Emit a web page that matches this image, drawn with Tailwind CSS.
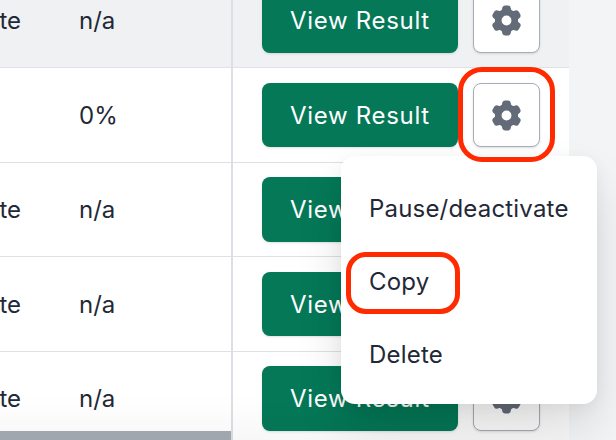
<!doctype html>
<html>
<head>
<meta charset="utf-8">
<script src="https://cdn.jsdelivr.net/npm/@tailwindcss/browser@4"></script>
</head>
<body class="m-0">
<div class="relative w-[616px] h-[440px] overflow-hidden bg-[#f3f4f6] font-['Inter','Noto_Sans',sans-serif] text-[24px] text-[#1f2937]">
  <div class="w-[569px] -mt-[26px] bg-white flex flex-col">

    <div class="h-[94px] shrink-0 flex bg-[#f0f1f3] border-b border-[#dfe0e5]">
      <div class="w-[231px] shrink-0 flex items-center pt-[1px]">
        <div class="w-[21px] flex justify-end whitespace-nowrap">Complete</div>
        <div class="ml-[58px]">n/a</div>
      </div>
      <div class="flex-1 border-l-2 border-[#dedfe4] pl-[29px] flex items-center gap-[15px]">
        <button class="w-[196px] h-[64.5px] rounded-[8px] bg-[#047857] text-white font-normal tracking-[0.68px] shadow-sm pt-[1px]">View Result</button>
        <button class="w-[67px] h-[64.5px] rounded-[8px] bg-white border border-[#a9adb6] flex items-center justify-center shadow-sm">
          <svg viewBox="0 0 24 24" class="w-[37px] h-[37px]" fill="#646b78"><path fill-rule="evenodd" clip-rule="evenodd" d="M11.078 2.25c-.917 0-1.699.663-1.85 1.567L9.05 4.889c-.02.12-.115.26-.297.348a7.493 7.493 0 0 0-.986.57c-.166.115-.334.126-.45.083L6.3 5.508a1.875 1.875 0 0 0-2.282.819l-.922 1.597a1.875 1.875 0 0 0 .432 2.385l.84.692c.095.078.17.229.154.43a7.598 7.598 0 0 0 0 1.139c.015.2-.059.352-.153.43l-.841.692a1.875 1.875 0 0 0-.432 2.385l.922 1.597a1.875 1.875 0 0 0 2.282.818l1.019-.382c.115-.043.283-.031.45.082.312.214.641.405.985.57.182.088.277.228.297.35l.178 1.071c.151.904.933 1.567 1.85 1.567h1.844c.916 0 1.699-.663 1.85-1.567l.178-1.072c.02-.12.114-.26.297-.349.344-.165.673-.356.985-.57.167-.114.335-.125.45-.082l1.02.382a1.875 1.875 0 0 0 2.28-.819l.923-1.597a1.875 1.875 0 0 0-.432-2.385l-.84-.692c-.095-.078-.17-.229-.154-.43a7.614 7.614 0 0 0 0-1.139c-.016-.2.059-.352.153-.43l.84-.692c.708-.582.891-1.59.433-2.385l-.922-1.597a1.875 1.875 0 0 0-2.282-.818l-1.02.382c-.114.043-.282.031-.449-.083a7.49 7.49 0 0 0-.985-.57c-.183-.087-.277-.227-.297-.348l-.179-1.072a1.875 1.875 0 0 0-1.85-1.567h-1.843ZM12 15.2a3.2 3.2 0 1 0 0-6.4 3.2 3.2 0 0 0 0 6.4Z"/></svg>
        </button>
      </div>
    </div>

    <div class="h-[95px] shrink-0 flex border-b border-[#dfe0e5]">
      <div class="w-[231px] shrink-0 flex items-center pt-[1px]">
        <div class="w-[21px]"></div>
        <div class="ml-[58px]">0%</div>
      </div>
      <div class="flex-1 border-l-2 border-[#dedfe4] pl-[29px] flex items-center gap-[15px]">
        <button class="w-[196px] h-[64.5px] rounded-[8px] bg-[#047857] text-white font-normal tracking-[0.68px] shadow-sm pt-[1px]">View Result</button>
        <button class="w-[67px] h-[64.5px] rounded-[8px] bg-white border border-[#a9adb6] flex items-center justify-center shadow-sm">
          <svg viewBox="0 0 24 24" class="w-[37px] h-[37px]" fill="#646b78"><path fill-rule="evenodd" clip-rule="evenodd" d="M11.078 2.25c-.917 0-1.699.663-1.85 1.567L9.05 4.889c-.02.12-.115.26-.297.348a7.493 7.493 0 0 0-.986.57c-.166.115-.334.126-.45.083L6.3 5.508a1.875 1.875 0 0 0-2.282.819l-.922 1.597a1.875 1.875 0 0 0 .432 2.385l.84.692c.095.078.17.229.154.43a7.598 7.598 0 0 0 0 1.139c.015.2-.059.352-.153.43l-.841.692a1.875 1.875 0 0 0-.432 2.385l.922 1.597a1.875 1.875 0 0 0 2.282.818l1.019-.382c.115-.043.283-.031.45.082.312.214.641.405.985.57.182.088.277.228.297.35l.178 1.071c.151.904.933 1.567 1.85 1.567h1.844c.916 0 1.699-.663 1.85-1.567l.178-1.072c.02-.12.114-.26.297-.349.344-.165.673-.356.985-.57.167-.114.335-.125.45-.082l1.02.382a1.875 1.875 0 0 0 2.28-.819l.923-1.597a1.875 1.875 0 0 0-.432-2.385l-.84-.692c-.095-.078-.17-.229-.154-.43a7.614 7.614 0 0 0 0-1.139c-.016-.2.059-.352.153-.43l.84-.692c.708-.582.891-1.59.433-2.385l-.922-1.597a1.875 1.875 0 0 0-2.282-.818l-1.02.382c-.114.043-.282.031-.449-.083a7.49 7.49 0 0 0-.985-.57c-.183-.087-.277-.227-.297-.348l-.179-1.072a1.875 1.875 0 0 0-1.85-1.567h-1.843ZM12 15.2a3.2 3.2 0 1 0 0-6.4 3.2 3.2 0 0 0 0 6.4Z"/></svg>
        </button>
      </div>
    </div>

    <div class="h-[94px] shrink-0 flex border-b border-[#dfe0e5]">
      <div class="w-[231px] shrink-0 flex items-center pt-[1px]">
        <div class="w-[21px] flex justify-end whitespace-nowrap">Complete</div>
        <div class="ml-[58px]">n/a</div>
      </div>
      <div class="flex-1 border-l-2 border-[#dedfe4] pl-[29px] flex items-center gap-[15px]">
        <button class="w-[196px] h-[64.5px] rounded-[8px] bg-[#047857] text-white font-normal tracking-[0.68px] shadow-sm pt-[1px]">View Result</button>
        <button class="w-[67px] h-[64.5px] rounded-[8px] bg-white border border-[#a9adb6] flex items-center justify-center shadow-sm">
          <svg viewBox="0 0 24 24" class="w-[37px] h-[37px]" fill="#646b78"><path fill-rule="evenodd" clip-rule="evenodd" d="M11.078 2.25c-.917 0-1.699.663-1.85 1.567L9.05 4.889c-.02.12-.115.26-.297.348a7.493 7.493 0 0 0-.986.57c-.166.115-.334.126-.45.083L6.3 5.508a1.875 1.875 0 0 0-2.282.819l-.922 1.597a1.875 1.875 0 0 0 .432 2.385l.84.692c.095.078.17.229.154.43a7.598 7.598 0 0 0 0 1.139c.015.2-.059.352-.153.43l-.841.692a1.875 1.875 0 0 0-.432 2.385l.922 1.597a1.875 1.875 0 0 0 2.282.818l1.019-.382c.115-.043.283-.031.45.082.312.214.641.405.985.57.182.088.277.228.297.35l.178 1.071c.151.904.933 1.567 1.85 1.567h1.844c.916 0 1.699-.663 1.85-1.567l.178-1.072c.02-.12.114-.26.297-.349.344-.165.673-.356.985-.57.167-.114.335-.125.45-.082l1.02.382a1.875 1.875 0 0 0 2.28-.819l.923-1.597a1.875 1.875 0 0 0-.432-2.385l-.84-.692c-.095-.078-.17-.229-.154-.43a7.614 7.614 0 0 0 0-1.139c-.016-.2.059-.352.153-.43l.84-.692c.708-.582.891-1.59.433-2.385l-.922-1.597a1.875 1.875 0 0 0-2.282-.818l-1.02.382c-.114.043-.282.031-.449-.083a7.49 7.49 0 0 0-.985-.57c-.183-.087-.277-.227-.297-.348l-.179-1.072a1.875 1.875 0 0 0-1.85-1.567h-1.843ZM12 15.2a3.2 3.2 0 1 0 0-6.4 3.2 3.2 0 0 0 0 6.4Z"/></svg>
        </button>
      </div>
    </div>

    <div class="h-[95px] shrink-0 flex border-b border-[#dfe0e5]">
      <div class="w-[231px] shrink-0 flex items-center pt-[1px]">
        <div class="w-[21px] flex justify-end whitespace-nowrap">Complete</div>
        <div class="ml-[58px]">n/a</div>
      </div>
      <div class="flex-1 border-l-2 border-[#dedfe4] pl-[29px] flex items-center gap-[15px]">
        <button class="w-[196px] h-[64.5px] rounded-[8px] bg-[#047857] text-white font-normal tracking-[0.68px] shadow-sm pt-[1px]">View Result</button>
        <button class="w-[67px] h-[64.5px] rounded-[8px] bg-white border border-[#a9adb6] flex items-center justify-center shadow-sm">
          <svg viewBox="0 0 24 24" class="w-[37px] h-[37px]" fill="#646b78"><path fill-rule="evenodd" clip-rule="evenodd" d="M11.078 2.25c-.917 0-1.699.663-1.85 1.567L9.05 4.889c-.02.12-.115.26-.297.348a7.493 7.493 0 0 0-.986.57c-.166.115-.334.126-.45.083L6.3 5.508a1.875 1.875 0 0 0-2.282.819l-.922 1.597a1.875 1.875 0 0 0 .432 2.385l.84.692c.095.078.17.229.154.43a7.598 7.598 0 0 0 0 1.139c.015.2-.059.352-.153.43l-.841.692a1.875 1.875 0 0 0-.432 2.385l.922 1.597a1.875 1.875 0 0 0 2.282.818l1.019-.382c.115-.043.283-.031.45.082.312.214.641.405.985.57.182.088.277.228.297.35l.178 1.071c.151.904.933 1.567 1.85 1.567h1.844c.916 0 1.699-.663 1.85-1.567l.178-1.072c.02-.12.114-.26.297-.349.344-.165.673-.356.985-.57.167-.114.335-.125.45-.082l1.02.382a1.875 1.875 0 0 0 2.28-.819l.923-1.597a1.875 1.875 0 0 0-.432-2.385l-.84-.692c-.095-.078-.17-.229-.154-.43a7.614 7.614 0 0 0 0-1.139c-.016-.2.059-.352.153-.43l.84-.692c.708-.582.891-1.59.433-2.385l-.922-1.597a1.875 1.875 0 0 0-2.282-.818l-1.02.382c-.114.043-.282.031-.449-.083a7.49 7.49 0 0 0-.985-.57c-.183-.087-.277-.227-.297-.348l-.179-1.072a1.875 1.875 0 0 0-1.85-1.567h-1.843ZM12 15.2a3.2 3.2 0 1 0 0-6.4 3.2 3.2 0 0 0 0 6.4Z"/></svg>
        </button>
      </div>
    </div>

    <div class="h-[93px] shrink-0 flex">
      <div class="w-[231px] shrink-0 flex items-center pt-[1px]">
        <div class="w-[21px] flex justify-end whitespace-nowrap">Complete</div>
        <div class="ml-[58px]">n/a</div>
      </div>
      <div class="flex-1 border-l-2 border-[#dedfe4] pl-[29px] flex items-center gap-[15px]">
        <button class="w-[196px] h-[64.5px] rounded-[8px] bg-[#047857] text-white font-normal tracking-[0.68px] shadow-sm pt-[1px]">View Result</button>
        <button class="w-[67px] h-[64.5px] rounded-[8px] bg-white border border-[#a9adb6] flex items-center justify-center shadow-sm">
          <svg viewBox="0 0 24 24" class="w-[37px] h-[37px]" fill="#646b78"><path fill-rule="evenodd" clip-rule="evenodd" d="M11.078 2.25c-.917 0-1.699.663-1.85 1.567L9.05 4.889c-.02.12-.115.26-.297.348a7.493 7.493 0 0 0-.986.57c-.166.115-.334.126-.45.083L6.3 5.508a1.875 1.875 0 0 0-2.282.819l-.922 1.597a1.875 1.875 0 0 0 .432 2.385l.84.692c.095.078.17.229.154.43a7.598 7.598 0 0 0 0 1.139c.015.2-.059.352-.153.43l-.841.692a1.875 1.875 0 0 0-.432 2.385l.922 1.597a1.875 1.875 0 0 0 2.282.818l1.019-.382c.115-.043.283-.031.45.082.312.214.641.405.985.57.182.088.277.228.297.35l.178 1.071c.151.904.933 1.567 1.85 1.567h1.844c.916 0 1.699-.663 1.85-1.567l.178-1.072c.02-.12.114-.26.297-.349.344-.165.673-.356.985-.57.167-.114.335-.125.45-.082l1.02.382a1.875 1.875 0 0 0 2.28-.819l.923-1.597a1.875 1.875 0 0 0-.432-2.385l-.84-.692c-.095-.078-.17-.229-.154-.43a7.614 7.614 0 0 0 0-1.139c-.016-.2.059-.352.153-.43l.84-.692c.708-.582.891-1.59.433-2.385l-.922-1.597a1.875 1.875 0 0 0-2.282-.818l-1.02.382c-.114.043-.282.031-.449-.083a7.49 7.49 0 0 0-.985-.57c-.183-.087-.277-.227-.297-.348l-.179-1.072a1.875 1.875 0 0 0-1.85-1.567h-1.843ZM12 15.2a3.2 3.2 0 1 0 0-6.4 3.2 3.2 0 0 0 0 6.4Z"/></svg>
        </button>
      </div>
    </div>
  </div>

  <!-- soft fade over the bottom of the table -->
  <div class="absolute left-0 top-[395px] w-[569px] h-[45px] bg-gradient-to-b from-transparent to-black/[0.03]"></div>

  <!-- horizontal scrollbar -->
  <div class="absolute left-0 top-[431px] w-[231px] h-[9px] bg-[#a1a7ae]"></div>

  <!-- dropdown menu -->
  <div class="absolute left-[341px] top-[156px] w-[256px] h-[248px] rounded-[14px] bg-white shadow-[0_25px_50px_-4px_rgba(0,0,0,0.14),0_4px_16px_rgba(0,0,0,0.05)] flex flex-col pt-[16px] pl-[28px] tracking-[0.19px]">
    <div class="h-[73px] flex items-center">Pause/deactivate</div>
    <div class="h-[73px] flex items-center">Copy</div>
    <div class="h-[73px] flex items-center">Delete</div>
  </div>

  <!-- red annotation outlines -->
  <div class="absolute left-[458px] top-[67px] w-[97px] h-[95px] rounded-[24px] border-[5px] border-[#ff2a00]"></div>
  <div class="absolute left-[346px] top-[252px] w-[114px] h-[62px] rounded-[20px] border-[5px] border-[#ff2a00]"></div>
</div>
</body>
</html>
